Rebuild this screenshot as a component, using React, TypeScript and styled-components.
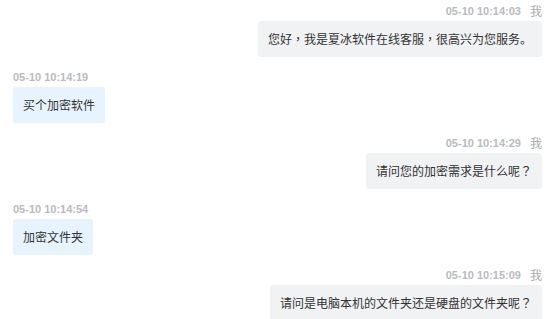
import React from "react";
import styled, { createGlobalStyle } from "styled-components";

const GlobalStyle = createGlobalStyle`
  html, body {
    margin: 0;
    padding: 0;
    background: #ffffff;
    overflow: hidden;
  }
  body {
    font-family: "Noto Sans CJK SC", "Liberation Sans", sans-serif;
  }
`;

const ChatList = styled.div`
  display: flex;
  flex-direction: column;
  gap: 13px;
  padding: 4px 18px 0 13px;
  width: 560px;
  box-sizing: border-box;
`;

const Message = styled.div<{ $mine: boolean }>`
  display: flex;
  flex-direction: column;
  align-items: ${(p) => (p.$mine ? "flex-end" : "flex-start")};
  gap: 3px;
`;

const Meta = styled.div`
  display: flex;
  align-items: center;
  gap: 9px;
  height: 14px;
`;

const Time = styled.span`
  font-family: "Liberation Sans", Arial, sans-serif;
  font-weight: bold;
  font-size: 11px;
  line-height: 14px;
  color: #b9bbbf;
`;

const Sender = styled.span`
  font-family: "Noto Sans CJK SC", sans-serif;
  font-size: 12px;
  line-height: 14px;
  color: #a9a9a9;
`;

const Bubble = styled.div<{ $mine: boolean }>`
  background: ${(p) => (p.$mine ? "#f1f2f4" : "#e7f3fe")};
  color: #333333;
  font-size: 12px;
  line-height: 16px;
  padding: 10px;
  border-radius: 3px;
  white-space: nowrap;
`;

const Punct = styled.span`
  font-family: "Noto Sans CJK TC", "Noto Sans CJK SC", sans-serif;
`;

type Msg = { time: string; mine: boolean; text: string };

const messages: Msg[] = [
  { time: "05-10 10:14:03", mine: true, text: "您好，我是夏冰软件在线客服，很高兴为您服务。" },
  { time: "05-10 10:14:19", mine: false, text: "买个加密软件" },
  { time: "05-10 10:14:29", mine: true, text: "请问您的加密需求是什么呢？" },
  { time: "05-10 10:14:54", mine: false, text: "加密文件夹" },
  { time: "05-10 10:15:09", mine: true, text: "请问是电脑本机的文件夹还是硬盘的文件夹呢？" },
];

function renderText(text: string) {
  return text.split(/([，？])/).map((part, i) =>
    part === "，" || part === "？" ? <Punct key={i}>{part}</Punct> : <React.Fragment key={i}>{part}</React.Fragment>
  );
}

export default function App() {
  return (
    <>
      <GlobalStyle />
      <ChatList>
        {messages.map((m, i) => (
          <Message key={i} $mine={m.mine}>
            <Meta>
              <Time>{m.time}</Time>
              {m.mine && <Sender>我</Sender>}
            </Meta>
            <Bubble $mine={m.mine}>{renderText(m.text)}</Bubble>
          </Message>
        ))}
      </ChatList>
    </>
  );
}
